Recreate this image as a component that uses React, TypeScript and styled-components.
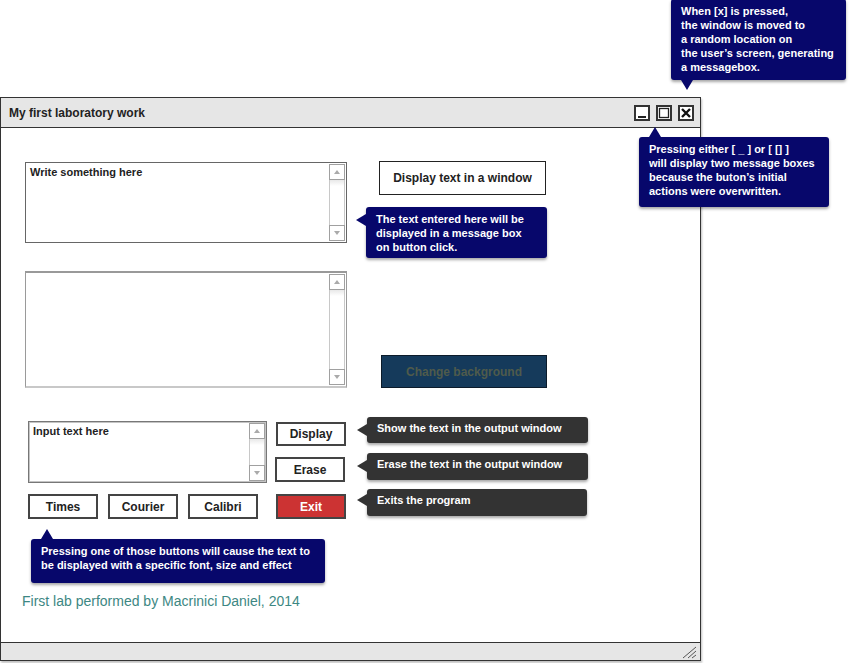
import React from 'react';
import styled, { createGlobalStyle, css } from 'styled-components';

const Global = createGlobalStyle`
  html, body { margin: 0; padding: 0; background: #fff; }
  body { font-family: "Liberation Sans", Arial, sans-serif; }
  * { box-sizing: border-box; }
`;

const Page = styled.div`
  position: relative;
  width: 849px;
  height: 663px;
  overflow: hidden;
`;

const Window = styled.div`
  margin-top: 97px;
  width: 701px;
  height: 564px;
  border: 1px solid #333;
  display: flex;
  flex-direction: column;
  background: #fff;
  box-shadow: 1px 2px 2px rgba(0, 0, 0, 0.25);
`;

const TitleBar = styled.div`
  height: 30px;
  flex: none;
  background: #e6e6e6;
  border-bottom: 1px solid #333;
  display: flex;
  align-items: center;
  padding: 0 6px 0 8px;
`;

const Title = styled.div`
  flex: 1;
  font-size: 12px;
  font-weight: bold;
  color: #222;
`;

const WinButtons = styled.div`
  display: flex;
  gap: 6px;
  margin-top: 1px;
`;

const WinButton = styled.div`
  width: 16px;
  height: 16px;
  border: 2px solid #333;
  background: #fff;
  display: flex;
  align-items: center;
  justify-content: center;
`;

const Content = styled.div`
  flex: 1;
  display: flex;
  flex-direction: column;
  padding: 34px 0 0 24px;
`;

const Row = styled.div<{ $align?: string; $mt?: number }>`
  display: flex;
  align-items: ${(p) => p.$align || 'flex-start'};
  margin-top: ${(p) => p.$mt || 0}px;
`;

type TAVariant = 'a' | 'b' | 'c';

const TextBox = styled.div<{ $w: number; $h: number; $variant: TAVariant }>`
  width: ${(p) => p.$w}px;
  height: ${(p) => p.$h}px;
  flex: none;
  display: flex;
  background: #fff;
  ${(p) =>
    p.$variant === 'a'
      ? css`
          border: 1px solid #666;
        `
      : p.$variant === 'b'
      ? css`
          border: 1px solid #9a9a9a;
          border-top: 2px solid #999;
          border-bottom: 2px solid #c8c8c8;
        `
      : css`
          border: 1px solid #777;
          box-shadow: inset 0 0 0 1px #c4c4c4;
        `}
`;

const BoxText = styled.div`
  flex: 1;
  padding: 3px 4px;
  font-size: 11px;
  line-height: 13px;
  font-weight: bold;
  color: #222;
`;

const ScrollBar = styled.div`
  width: 16px;
  margin: 1px 1px 1px 0;
  display: flex;
  flex-direction: column;
`;

const ScrollBtn = styled.div<{ $dir: 'up' | 'down' }>`
  height: 16px;
  flex: none;
  border: 1px solid #a0a0a0;
  background: #fff;
  display: flex;
  align-items: center;
  justify-content: center;
  &::after {
    content: '';
    width: 0;
    height: 0;
    border-left: 3px solid transparent;
    border-right: 3px solid transparent;
    ${(p) =>
      p.$dir === 'up'
        ? css`
            border-bottom: 4px solid #aaa;
          `
        : css`
            border-top: 4px solid #aaa;
          `}
  }
`;

const ScrollTrack = styled.div`
  flex: 1;
  border-left: 1px solid #c8c8c8;
  border-right: 1px solid #c8c8c8;
  background: linear-gradient(#e8e8e8 0, #fff 6px);
`;

type BtnVariant = 'plain' | 'wide' | 'navy' | 'danger';

const Button = styled.div<{ $w: number; $h: number; $variant?: BtnVariant }>`
  width: ${(p) => p.$w}px;
  height: ${(p) => p.$h}px;
  flex: none;
  display: flex;
  align-items: center;
  justify-content: center;
  font-size: 12px;
  font-weight: bold;
  color: #222;
  background: #fff;
  border: 2px solid #444;
  ${(p) =>
    p.$variant === 'wide' &&
    css`
      border: 1px solid #222;
    `}
  ${(p) =>
    p.$variant === 'navy' &&
    css`
      background: #153a5b;
      border: 1px solid #0c1b2a;
      color: #4f5b4b;
    `}
  ${(p) =>
    p.$variant === 'danger' &&
    css`
      background: #cc3333;
      border: 2px solid #444;
      color: #fff;
    `}
`;

const Grid = styled.div`
  margin-top: 33px;
  margin-left: 3px;
  display: grid;
  grid-template-columns: 239px 70px;
  grid-template-rows: 62px 25px;
  column-gap: 9px;
  row-gap: 11px;
`;

const Stack = styled.div`
  display: flex;
  flex-direction: column;
  gap: 11px;
  padding-top: 1px;
`;

const FontRow = styled.div`
  display: flex;
  gap: 10px;
`;

const Footer = styled.div`
  margin-top: 74px;
  margin-left: -3px;
  font-size: 14px;
  line-height: 16px;
  color: #3d8783;
`;

const StatusBar = styled.div`
  height: 18px;
  flex: none;
  background: #e6e6e6;
  border-top: 1px solid #333;
  display: flex;
  justify-content: flex-end;
  align-items: flex-end;
  padding: 0 2px 1px 0;
`;

type Pointer = 'left' | 'up' | 'down';

const Callout = styled.div<{
  $x: number;
  $y: number;
  $w: number;
  $h: number;
  $tone: 'navy' | 'dark';
  $pointer: Pointer;
  $off: number;
}>`
  position: absolute;
  left: ${(p) => p.$x}px;
  top: ${(p) => p.$y}px;
  width: ${(p) => p.$w}px;
  height: ${(p) => p.$h}px;
  background: ${(p) => (p.$tone === 'navy' ? '#07076b' : '#333333')};
  border-radius: 3px;
  box-shadow: 0 2px 3px rgba(0, 0, 0, 0.35);
  color: #fff;
  font-size: 11px;
  font-weight: bold;
  line-height: 14px;
  padding: ${(p) => (p.$tone === 'navy' ? '5px 10px' : '4px 10px')};
  white-space: pre;
  &::after {
    content: '';
    position: absolute;
    width: 0;
    height: 0;
    ${(p) =>
      p.$pointer === 'left'
        ? css`
            left: -10px;
            top: ${p.$off}px;
            border-top: 6px solid transparent;
            border-bottom: 6px solid transparent;
            border-right: 10px solid ${p.$tone === 'navy' ? '#07076b' : '#333333'};
          `
        : p.$pointer === 'up'
        ? css`
            top: -10px;
            left: ${p.$off}px;
            border-left: 6px solid transparent;
            border-right: 6px solid transparent;
            border-bottom: 10px solid #07076b;
          `
        : css`
            bottom: -10px;
            left: ${p.$off}px;
            border-left: 6px solid transparent;
            border-right: 6px solid transparent;
            border-top: 10px solid #07076b;
          `}
  }
`;

const Scroll = () => (
  <ScrollBar>
    <ScrollBtn $dir="up" />
    <ScrollTrack />
    <ScrollBtn $dir="down" />
  </ScrollBar>
);

export default function App() {
  return (
    <Page>
      <Global />
      <Window>
        <TitleBar>
          <Title>My first laboratory work</Title>
          <WinButtons>
            <WinButton>
              <svg width="12" height="12" viewBox="0 0 12 12">
                <rect x="2" y="9" width="8" height="2" fill="#222" />
              </svg>
            </WinButton>
            <WinButton>
              <svg width="12" height="12" viewBox="0 0 12 12">
                <rect x="1.5" y="1.5" width="9" height="9" fill="none" stroke="#222" strokeWidth="1.3" />
              </svg>
            </WinButton>
            <WinButton>
              <svg width="12" height="12" viewBox="0 0 12 12">
                <path d="M2 2 L10 10 M10 2 L2 10" stroke="#111" strokeWidth="2.4" strokeLinecap="butt" />
              </svg>
            </WinButton>
          </WinButtons>
        </TitleBar>
        <Content>
          <Row>
            <TextBox $w={322} $h={81} $variant="a">
              <BoxText>Write something here</BoxText>
              <Scroll />
            </TextBox>
            <Button $w={167} $h={34} $variant="wide" style={{ marginLeft: 32, marginTop: -1 }}>
              Display text in a window
            </Button>
          </Row>
          <Row $align="flex-end" $mt={28}>
            <TextBox $w={322} $h={117} $variant="b">
              <BoxText />
              <Scroll />
            </TextBox>
            <Button $w={166} $h={33} $variant="navy" style={{ marginLeft: 34 }}>
              Change background
            </Button>
          </Row>
          <Grid>
            <TextBox $w={239} $h={62} $variant="c">
              <BoxText>Input text here</BoxText>
              <Scroll />
            </TextBox>
            <Stack>
              <Button $w={70} $h={24}>Display</Button>
              <Button $w={70} $h={25} style={{ marginLeft: -1 }}>Erase</Button>
            </Stack>
            <FontRow>
              <Button $w={70} $h={25}>Times</Button>
              <Button $w={70} $h={25}>Courier</Button>
              <Button $w={70} $h={25}>Calibri</Button>
            </FontRow>
            <Button $w={70} $h={25} $variant="danger">Exit</Button>
          </Grid>
          <Footer>First lab performed by Macrinici Daniel, 2014</Footer>
        </Content>
        <StatusBar>
          <svg width="18" height="15" viewBox="0 0 18 15">
            <path d="M3 14 L16 3 M8 14 L16 7 M12 14 L16 11" stroke="#555" strokeWidth="1" />
          </svg>
        </StatusBar>
      </Window>

      <Callout $x={671} $y={-1} $w={175} $h={81} $tone="navy" $pointer="down" $off={10}>
        {'When [x] is pressed,\nthe window is moved to\na random location on\nthe user\u2019s screen, generating\na messagebox.'}
      </Callout>
      <Callout $x={639} $y={137} $w={190} $h={70} $tone="navy" $pointer="up" $off={10}>
        {'Pressing either [ _ ] or [ [] ]\nwill display two message boxes\nbecause the buton\u2019s initial\nactions were overwritten.'}
      </Callout>
      <Callout $x={366} $y={207} $w={181} $h={51} $tone="navy" $pointer="left" $off={7}>
        {'The text entered here will be\ndisplayed in a message box\non button click.'}
      </Callout>
      <Callout $x={367} $y={417} $w={221} $h={26} $tone="dark" $pointer="left" $off={7}>
        Show the text in the output window
      </Callout>
      <Callout $x={367} $y={453} $w={221} $h={27} $tone="dark" $pointer="left" $off={7}>
        Erase the text in the output window
      </Callout>
      <Callout $x={367} $y={489} $w={220} $h={27} $tone="dark" $pointer="left" $off={5}>
        Exits the program
      </Callout>
      <Callout $x={31} $y={539} $w={294} $h={44} $tone="navy" $pointer="up" $off={10}>
        {'Pressing one of those buttons will cause the text to\nbe displayed with a specific font, size and effect'}
      </Callout>
    </Page>
  );
}
